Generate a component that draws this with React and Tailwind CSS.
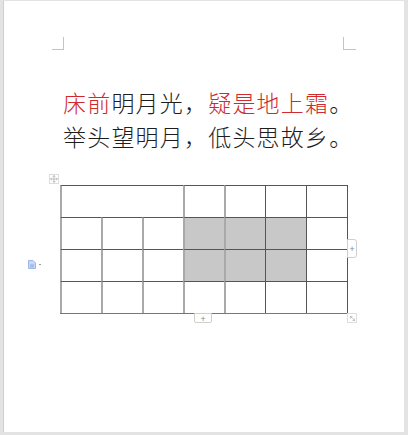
import { Move, MoveDiagonal2 } from "lucide-react";

const cjk = { fontFamily: '"Noto Sans CJK SC", "Noto Sans", sans-serif' };

// columns whose left edge is drawn as a light double-width rule
const lightCol = [true, true, true, true, true, false, false];

function Cell({ col, span = 1, shaded = false }) {
  const left = lightCol[col]
    ? "border-l-2 border-l-[#a9a9a9]"
    : "border-l border-l-[#555]";
  return (
    <div
      className={`border-t border-t-[#555] ${left} ${
        shaded ? "bg-[#c8c8c8]" : "bg-white"
      } ${span === 3 ? "col-span-3" : ""}`}
    />
  );
}

function PoemTable() {
  const rows = [1, 2, 3];
  return (
    <div className="relative ml-[8px] w-[288px]">
      <div className="grid grid-cols-[repeat(7,41px)] grid-rows-[repeat(4,32px)] border-r border-b border-r-[#555] border-b-[#777]">
        <Cell col={0} span={3} />
        {[3, 4, 5, 6].map((c) => (
          <Cell key={c} col={c} />
        ))}
        {rows.map((r) =>
          [0, 1, 2, 3, 4, 5, 6].map((c) => (
            <Cell
              key={`${r}-${c}`}
              col={c}
              shaded={r < 3 && c >= 3 && c <= 5}
            />
          ))
        )}
      </div>

      {/* move handle */}
      <div className="absolute -left-[11px] -top-[11px] w-[10px] h-[10px] border border-[#ddd] bg-white flex items-center justify-center">
        <Move size={8} strokeWidth={1.5} className="text-[#888]" />
      </div>

      {/* add column */}
      <div className="absolute left-[287px] top-[54px] w-[10px] h-[19px] border border-[#cfcfcf] rounded-r-[3px] bg-white flex items-center justify-center text-[9px] leading-none text-[#888]">
        +
      </div>

      {/* add row */}
      <div className="absolute left-[134px] top-[128px] w-[18px] h-[10px] border border-[#cfcfcf] rounded-b-[2px] bg-white flex items-center justify-center text-[9px] leading-none text-[#888]">
        +
      </div>

      {/* resize */}
      <div className="absolute left-[287px] top-[128px] w-[10px] h-[10px] border border-[#ddd] bg-white flex items-center justify-center">
        <MoveDiagonal2 size={7} strokeWidth={1.5} className="text-[#888]" />
      </div>

      {/* paragraph marker on the left */}
      <div className="absolute -left-[32px] top-[75px] flex items-center gap-[3px]">
        <svg width="8" height="9" viewBox="0 0 8 9">
          <path d="M0.5 0.5h4.5l2.5 2.5v5.5h-7z" fill="#c9d8f3" stroke="#9db6e6" />
          <path d="M2 5h4M2 6.8h4" stroke="#7f9fdc" strokeWidth="0.8" />
        </svg>
        <span className="w-[2px] h-[1px] bg-[#999]" />
      </div>
    </div>
  );
}

export default function App() {
  return (
    <div className="w-[408px] h-[435px] bg-[#e3e3e3] pl-[3px] pt-[1px] overflow-hidden">
      <div className="w-[401px] h-[431px] bg-white border-l border-l-[#cfcfcf] pt-[36px] px-[48px]">
        <div className="flex justify-between">
          <div className="w-[12px] h-[13px] border-r border-b border-[#c4c4c4]" />
          <div className="w-[13px] h-[13px] border-l border-b border-[#c4c4c4]" />
        </div>

        <div
          className="mt-[35px] pl-[11px] text-[23px] leading-[34px] tracking-[1.2px] text-[#1e1e1e] font-light whitespace-nowrap"
          style={cjk}
        >
          <p>
            <span className="text-[#d02a2c]">床前</span>明月光，
            <span className="text-[#d02a2c]">疑是地上霜</span>。
          </p>
          <p>举头望明月，低头思故乡。</p>
        </div>

        <div className="mt-[32px]">
          <PoemTable />
        </div>
      </div>
    </div>
  );
}
